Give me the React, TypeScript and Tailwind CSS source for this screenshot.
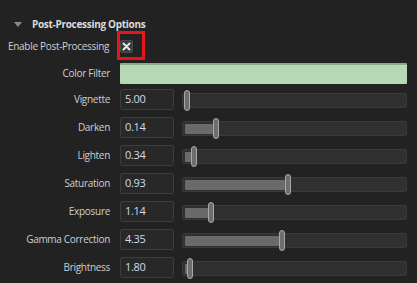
import React from "react";

const rows = [
  { label: "Vignette", value: "5.00", pos: 4 },
  { label: "Darken", value: "0.14", pos: 33 },
  { label: "Lighten", value: "0.34", pos: 11 },
  { label: "Saturation", value: "0.93", pos: 105 },
  { label: "Exposure", value: "1.14", pos: 28 },
  { label: "Gamma Correction", value: "4.35", pos: 99 },
  { label: "Brightness", value: "1.80", pos: 7 },
];

function Slider({ pos }: { pos: number }) {
  return (
    <div className="relative h-[15px] flex-1 rounded-[2px] border border-[#3a3a3a] bg-[#303030]">
      <div
        className="absolute top-[2px] left-[2px] h-[10px] rounded-[1px] bg-[#6a6a6a]"
        style={{ width: Math.max(pos - 3, 0) }}
      />
      <div
        className="absolute top-[-4px] h-[21px] w-[6px] rounded-full border border-[#a8a8a8] bg-[#6e6e6e]"
        style={{ left: pos - 3 }}
      />
    </div>
  );
}

export default function App() {
  return (
    <div
      className="h-[283px] w-[417px] overflow-hidden bg-[#222222] text-[10px] tracking-[-0.3px] text-[#cfcfcf]"
      style={{ fontFamily: '"Open Sans", "Noto Sans", sans-serif' }}
    >
      <div className="flex h-[20px] items-center pt-[24px] pl-[14px]">
        <span className="mr-[10px] h-0 w-0 border-x-[4px] border-t-[5px] border-x-transparent border-t-[#8a8a8a]" />
        <span className="font-bold text-[#dcdcdc]">Post-Processing Options</span>
      </div>

      <div className="mt-[15px] flex h-[14px] items-center">
        <div className="w-[110px] pl-[8px] whitespace-nowrap">Enable Post-Processing</div>
        <div className="relative ml-[10px]">
          <div className="flex h-[13px] w-[13px] items-center justify-center rounded-[2px] border border-[#4a4a4a] bg-[#3a3a3a]">
            <svg width="9" height="9" viewBox="0 0 9 9">
              <path d="M1.5 1.5 L7.5 7.5 M7.5 1.5 L1.5 7.5" stroke="#e8e8e8" strokeWidth="2" strokeLinecap="round" />
            </svg>
          </div>
          <div className="absolute top-[-9px] left-[-3px] h-[29px] w-[28px] border-[3px] border-[#e8141b]" />
        </div>
      </div>

      <div className="mt-[10px] flex h-[21px] items-center">
        <div className="w-[110px] text-right">Color Filter</div>
        <div className="ml-[10px] h-[21px] w-[287px] rounded-[1px] border-t-2 border-[#8fa88e] bg-[#b6d9b5]" />
      </div>

      <div className="mt-[5px] flex flex-col gap-[7px]">
        {rows.map((r) => (
          <div key={r.label} className="flex h-[21px] items-center">
            <div className="w-[110px] text-right whitespace-nowrap">{r.label}</div>
            <div className="ml-[10px] flex h-[21px] w-[54px] items-center rounded-[2px] border border-[#3c3c3c] bg-[#282828] pl-[4px] text-[11px] text-[#d4dae6]">
              {r.value}
            </div>
            <div className="ml-[8px] mr-[10px] flex flex-1 items-center pt-[2px]">
              <Slider pos={r.pos} />
            </div>
          </div>
        ))}
      </div>
    </div>
  );
}
